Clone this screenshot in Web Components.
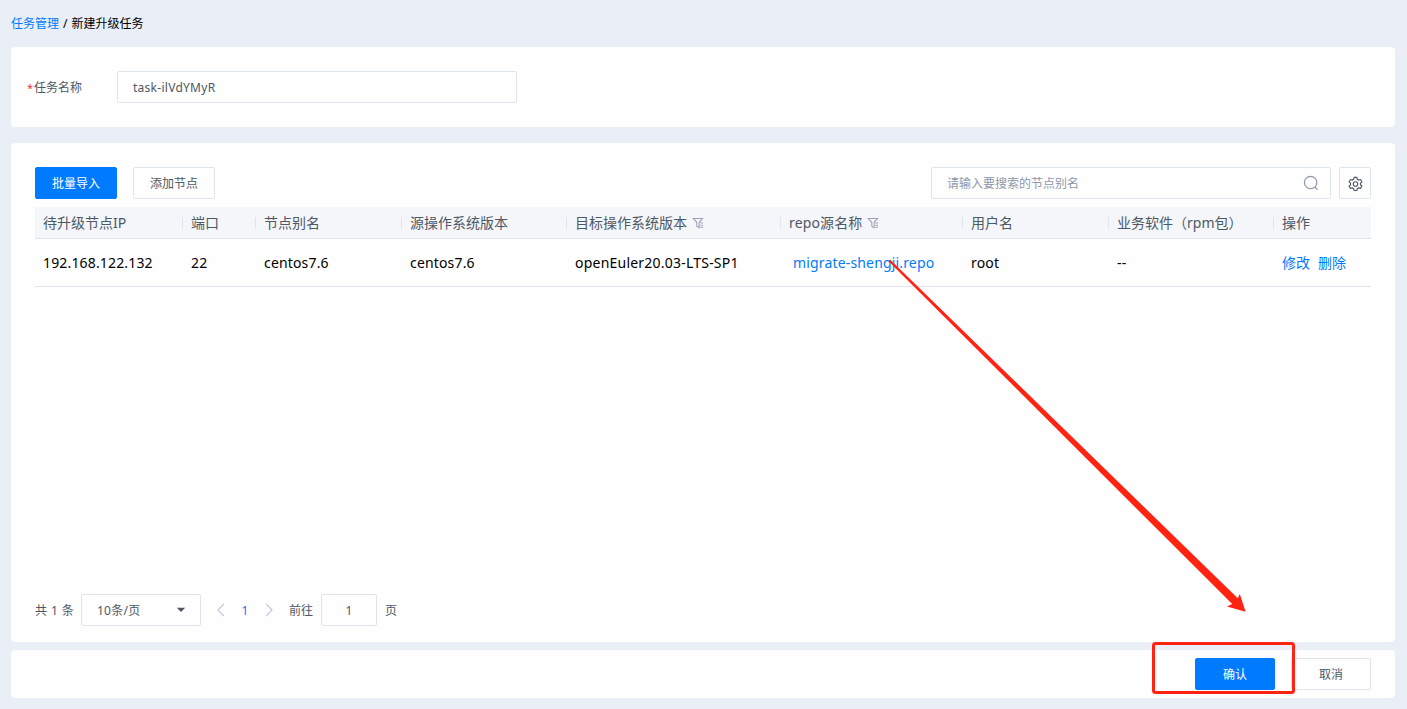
<!DOCTYPE html>
<html lang="zh-CN">
<head>
<meta charset="UTF-8">
<title>新建升级任务</title>
<style>
    body {
        margin: 0;
        height: 709px;
        overflow: hidden;
        background-color: #e9eef7;
        font-family: "Noto Sans", "Noto Sans CJK SC", sans-serif;
        font-size: 12px;
        line-height: 16px;
        color: #4e5865;
    }
</style>
</head>
<body>
<upgrade-page></upgrade-page>
<script>
class PageCrumb extends HTMLElement{
    constructor(){
        super();
        this.attachShadow({mode:'open'});
        this.shadowRoot.innerHTML = `
            <style>
                :host{
                    display: flex;
                    gap: 4px;
                    height: 47px;
                    align-items: center;
                    color: #000;
                }
                a{ color: #007aff; }
            </style>
            <a><slot name="parent"></slot></a><span>/</span><span><slot></slot></span>
        `;
    }
}
customElements.define('page-crumb', PageCrumb);

class PagePanel extends HTMLElement{
    constructor(){
        super();
        this.attachShadow({mode:'open'});
        this.shadowRoot.innerHTML = `
            <style>
                :host{
                    display: block;
                    box-sizing: border-box;
                    background-color: #fefefe;
                    border-radius: 4px;
                }
            </style>
            <slot></slot>
        `;
    }
}
customElements.define('page-panel', PagePanel);

class UiButton extends HTMLElement{
    constructor(){
        super();
        this.attachShadow({mode:'open'});
        this.shadowRoot.innerHTML = `
            <style>
                :host{
                    display: flex;
                    align-items: center;
                    justify-content: center;
                    box-sizing: border-box;
                    width: 82px;
                    height: 32px;
                    padding-top: 2px;
                    border: 1px solid #dfe5ef;
                    border-radius: 2px;
                    background-color: #fefefe;
                }
                :host([primary]){
                    background-color: #007aff;
                    border-color: #007aff;
                    color: #fff;
                }
                :host([small]){ width: 80px; }
                :host([icon]){
                    width: 32px;
                    padding-top: 0;
                }
            </style>
            <slot></slot>
        `;
    }
}
customElements.define('ui-button', UiButton);

class UiField extends HTMLElement{
    constructor(){
        super();
        this.attachShadow({mode:'open'});
        this.shadowRoot.innerHTML = `
            <style>
                :host{
                    display: flex;
                    align-items: center;
                    justify-content: space-between;
                    box-sizing: border-box;
                    width: 400px;
                    height: 32px;
                    padding: 0 11px 0 15px;
                    border: 1px solid #dfe5ef;
                    border-radius: 2px;
                    background-color: #fefefe;
                }
                span{ padding-top: 2px; }
            </style>
            <span><slot></slot></span>
            <slot name="suffix"></slot>
        `;
    }
}
customElements.define('ui-field', UiField);

class UiIcon extends HTMLElement{
    static get icons(){
        return {
            search: `<circle cx="7.6" cy="7.5" r="6.2"/><path d="M12 12l2.600 2.600"/>`,
            gear: `<path d="M6.600 1.500h2.800l.6 2 1.400.8 2-.5 1.400 2.400-1.500 1.500v1.600l1.500 1.500-1.400 2.400-2-.5-1.400.8-.6 2H6.600l-.6-2-1.400-.8-2 .5-1.400-2.400 1.500-1.500V7.700L1.200 6.200l1.400-2.400 2 .5L6 3.500z"/><circle cx="8" cy="8.500" r="2.400"/>`,
            filter: `<path d="M2.700 2.900h10.600L9.300 7.200v6.200L6.600 11.800V7.200z"/><path d="M10.700 8.100h3M10.700 10.500h3M10.700 12.900h3"/>`,
            prev: `<path d="M10.800 2L5 8l5.800 6"/>`,
            next: `<path d="M5.200 2L11 8l-5.800 6"/>`,
            caret: `<path d="M3.800 5.800h8.400L8 10z" fill="currentColor" stroke="none"/>`
        };
    }
    connectedCallback(){
        this.attachShadow({mode:'open'});
        this.shadowRoot.innerHTML = `
            <style>
                :host{
                    display: inline-flex;
                    width: 16px;
                    height: 16px;
                    flex: none;
                }
                svg{
                    width: 100%;
                    height: 100%;
                    fill: none;
                    stroke: currentColor;
                    stroke-width: 1.2;
                }
            </style>
            <svg viewBox="0 0 16 16">${UiIcon.icons[this.getAttribute('name')]}</svg>
        `;
    }
}
customElements.define('ui-icon', UiIcon);

class NodeTable extends HTMLElement{
    constructor(){
        super();
        this.attachShadow({mode:'open'});
    }
    connectedCallback(){
        this.renderHTML();
    }
    static get styleCss(){
        return `
            :host{
                display: block;
                margin-top: 8px;
                font-size: 14px;
                line-height: 20px;
            }
            .row{
                display: grid;
                grid-template-columns: 148px 73px 146px 165px 214px 182px 146px 165px 97px;
                align-items: center;
                box-sizing: border-box;
                height: 48px;
                border-bottom: 1px solid #dfe5ef;
                color: #000;
                white-space: nowrap;
            }
            .row:not(.head) .cell:not(.actions){
                letter-spacing: .16px;
            }
            .head{
                height: 32px;
                background-color: #f4f6fa;
                color: #4e5865;
            }
            .cell{
                display: flex;
                align-items: center;
                padding-left: 8px;
            }
            .row .cell.os{
                letter-spacing: .22px !important;
            }
            .head .cell:not(:last-child){
                background: linear-gradient(#dfe5ef, #dfe5ef) right center / 1px 12px no-repeat;
            }
            .head ui-icon{
                width: 14px;
                height: 14px;
                margin-left: 4px;
                color: #9aa3b5;
            }
            .head .source{
                letter-spacing: .13px;
            }
            .link{
                color: #007aff;
            }
            .repo{
                padding-left: 12px;
            }
            .actions{
                gap: 8px;
            }
        `;
    }
    renderHTML(){
        this.shadowRoot.innerHTML = `
            <style>${NodeTable.styleCss}</style>
            <section class="row head">
                <div class="cell"><span>待升级节点IP</span></div>
                <div class="cell"><span>端口</span></div>
                <div class="cell"><span>节点别名</span></div>
                <div class="cell"><span>源操作系统版本</span></div>
                <div class="cell"><span>目标操作系统版本</span><ui-icon name="filter"></ui-icon></div>
                <div class="cell source"><span>repo源名称</span><ui-icon name="filter"></ui-icon></div>
                <div class="cell"><span>用户名</span></div>
                <div class="cell"><span>业务软件（rpm包）</span></div>
                <div class="cell"><span>操作</span></div>
            </section>
            <section class="row">
                <div class="cell"><span>192.168.122.132</span></div>
                <div class="cell"><span>22</span></div>
                <div class="cell"><span>centos7.6</span></div>
                <div class="cell"><span>centos7.6</span></div>
                <div class="cell os"><span>openEuler20.03-LTS-SP1</span></div>
                <div class="cell repo link"><span>migrate-shengji.repo</span></div>
                <div class="cell"><span>root</span></div>
                <div class="cell"><span>--</span></div>
                <div class="cell actions link"><span>修改</span><span>删除</span></div>
            </section>
        `;
    }
}
customElements.define('node-table', NodeTable);

class PagePager extends HTMLElement{
    constructor(){
        super();
        this.attachShadow({mode:'open'});
        this.shadowRoot.innerHTML = `
            <style>
                :host{
                    display: flex;
                    align-items: center;
                    gap: 8px;
                    height: 32px;
                    white-space: nowrap;
                }
                span{ padding-top: 2px; }
                .total{
                    width: 38px;
                    word-spacing: .8px;
                }
                .size{
                    width: 120px;
                    letter-spacing: .25px;
                }
                .jump{
                    width: 56px;
                    padding: 0;
                    justify-content: center;
                }
                .pages{
                    display: flex;
                    align-items: center;
                    justify-content: space-between;
                    width: 64px;
                    margin: 0 4px;
                    color: #c3c9d8;
                }
                .current{ color: #2f6bf5; }
                .goto{ width: 24px; }
            </style>
            <span class="total">共 1 条</span>
            <ui-field class="size">10条/页<ui-icon slot="suffix" name="caret"></ui-icon></ui-field>
            <div class="pages">
                <ui-icon name="prev"></ui-icon>
                <span class="current">1</span>
                <ui-icon name="next"></ui-icon>
            </div>
            <span class="goto">前往</span>
            <ui-field class="jump">1</ui-field>
            <span>页</span>
        `;
    }
}
customElements.define('page-pager', PagePager);

class GuideMark extends HTMLElement{
    constructor(){
        super();
        this.attachShadow({mode:'open'});
        this.shadowRoot.innerHTML = `
            <style>
                :host{
                    position: absolute;
                    inset: 0;
                    pointer-events: none;
                }
                svg{ display: block; }
            </style>
            <svg width="1407" height="709" viewBox="0 0 1407 709">
                <path d="M888.500 261.200L890 259.600L1237.800 598.300L1239.800 594L1245.600 611.800L1227 606.600L1232.200 604z" fill="#ff2312"/>
                <rect x="1153.500" y="643.500" width="140" height="49" rx="2" fill="none" stroke="#ff2312" stroke-width="3"/>
            </svg>
        `;
    }
}
customElements.define('guide-mark', GuideMark);

class UpgradePage extends HTMLElement{
    constructor(){
        super();
        this.attachShadow({mode:'open'});
    }
    connectedCallback(){
        this.renderHTML();
    }
    static get styleCss(){
        return `
            :host{
                display: block;
                position: relative;
                box-sizing: border-box;
                height: 709px;
                padding: 0 12px 0 11px;
            }
            .task{
                display: flex;
                align-items: center;
                height: 80px;
                padding-left: 16px;
            }
            .label{
                display: flex;
                gap: 1px;
                width: 90px;
                padding-top: 2px;
            }
            .label i{
                width: 6px;
                font-style: normal;
                font-size: 11px;
                color: #f43146;
            }
            .name{
                letter-spacing: .27px;
            }
            .nodes{
                display: flex;
                flex-direction: column;
                height: 499px;
                margin-top: 16px;
                padding: 24px 24px 16px;
            }
            .toolbar{
                display: flex;
            }
            .toolbar ui-button + ui-button{
                margin-left: 16px;
            }
            .toolbar .search{
                margin-left: auto;
                color: #8d98aa;
            }
            .toolbar .setting{
                margin-left: 8px;
            }
            .setting ui-icon{
                width: 15px;
                height: 15px;
            }
            page-pager{
                margin-top: auto;
            }
            .footer{
                display: flex;
                align-items: center;
                justify-content: flex-end;
                gap: 16px;
                height: 48px;
                margin-top: 8px;
                padding-right: 24px;
            }
        `;
    }
    renderHTML(){
        this.shadowRoot.innerHTML = `
            <style>${UpgradePage.styleCss}</style>
            <page-crumb><span slot="parent">任务管理</span>新建升级任务</page-crumb>
            <page-panel class="task">
                <div class="label"><i>*</i><span>任务名称</span></div>
                <ui-field><span class="name">task-ilVdYMyR</span></ui-field>
            </page-panel>
            <page-panel class="nodes">
                <div class="toolbar">
                    <ui-button primary>批量导入</ui-button>
                    <ui-button>添加节点</ui-button>
                    <ui-field class="search">请输入要搜索的节点别名<ui-icon slot="suffix" name="search"></ui-icon></ui-field>
                    <ui-button icon class="setting"><ui-icon name="gear"></ui-icon></ui-button>
                </div>
                <node-table></node-table>
                <page-pager></page-pager>
            </page-panel>
            <page-panel class="footer">
                <ui-button primary small>确认</ui-button>
                <ui-button small>取消</ui-button>
            </page-panel>
            <guide-mark></guide-mark>
        `;
    }
}
customElements.define('upgrade-page', UpgradePage);
</script>
</body>
</html>
